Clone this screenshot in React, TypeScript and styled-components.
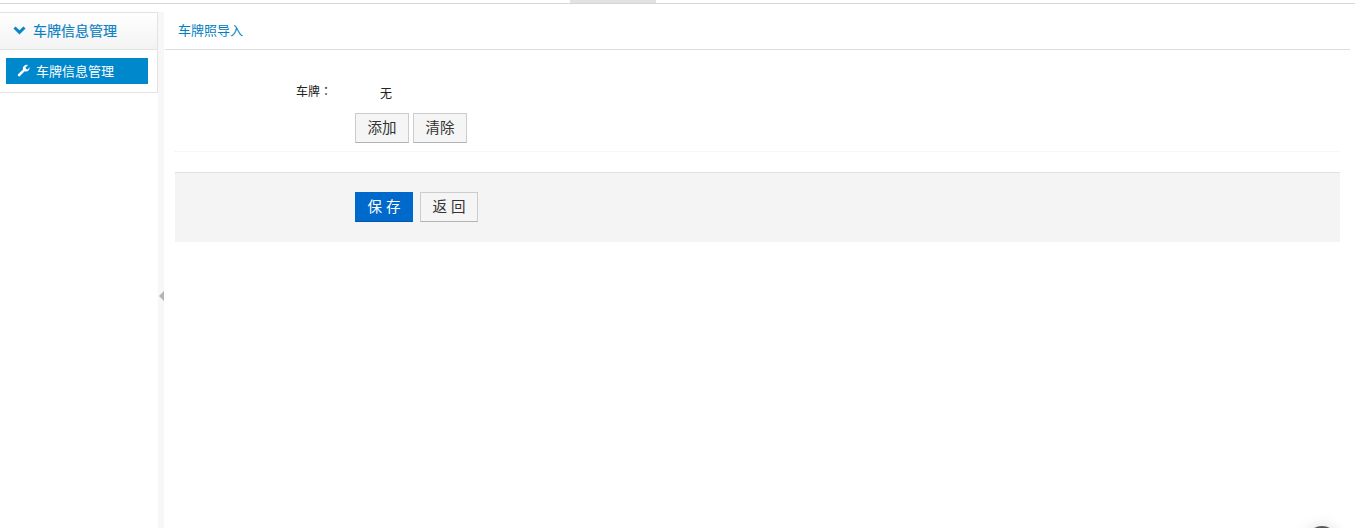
import React from "react";
import styled, { createGlobalStyle } from "styled-components";

const Global = createGlobalStyle`
  html, body { margin: 0; padding: 0; background: #fff; overflow: hidden; }
  body { font-family: "Liberation Sans", "Noto Sans CJK SC", sans-serif; font-size: 12px; color: #333; }
`;
const Page = styled.div`
  width: 1355px; height: 528px; display: flex; flex-direction: column; position: relative; overflow: hidden;
`;
const TopBar = styled.div`
  height: 3px; border-bottom: 1px solid #d6d6d6; padding-left: 570px; flex: none;
`;
const TopTab = styled.div`
  width: 86px; height: 3px; background: #e2e2e2;
`;
const Body = styled.div`
  flex: 1; display: flex; padding-top: 8px; min-height: 0;
`;
const Sidebar = styled.aside`
  width: 158px; flex: none;
`;
const MenuBox = styled.div`
  height: 81px; box-sizing: border-box; border: 1px solid #e3e3e3; border-left: none;
`;
const MenuHeader = styled.div`
  height: 37px; box-sizing: border-box; border-bottom: 1px solid #e3e3e3; padding-bottom: 2px;
  background: linear-gradient(#ffffff, #f3f3f3);
  display: flex; align-items: center; gap: 7px; padding-left: 13px;
  color: #0a82c4; font-size: 14px; font-weight: 400; -webkit-text-stroke: 0.2px #0a82c4;
`;
const MenuItem = styled.div`
  margin: 8px 9px 0 6px; height: 26px; box-sizing: border-box; padding-bottom: 2px; background: #0088cc; color: #fff;
  display: flex; align-items: center; gap: 6px; padding-left: 11px; font-size: 13px;
`;
const Divider = styled.div`
  width: 6px; flex: none; margin-right: 1px; background: #f7f7f7; position: relative;
`;
const Handle = styled.div`
  position: absolute; left: 1px; top: 279px; width: 0; height: 0;
  border-style: solid; border-width: 5px 5px 5px 0; border-color: transparent #b3b3b3 transparent transparent;
`;
const Content = styled.main`
  flex: 1; min-width: 0; padding-right: 5px;
`;
const Crumb = styled.div`
  height: 38px; box-sizing: border-box; border-bottom: 1px solid #dedede;
  padding: 10px 0 0 13px; color: #0080c0; font-size: 13px; line-height: 18px;
`;
const FormArea = styled.div`
  margin: 20px 10px 0;
`;
const FormRow = styled.div`
  height: 82px; box-sizing: border-box; border-bottom: 1px dotted #eeeeee;
  display: flex;
`;
const Label = styled.label`
  width: 157px; flex: none; box-sizing: border-box; text-align: right; padding: 13px 0 0 0;
  font-family: "Liberation Sans", "Noto Sans CJK TC", sans-serif;
  font-size: 12px; line-height: 18px; color: #222;
`;
const Field = styled.div`
  padding: 0 0 0 23px;
`;
const Value = styled.div`
  height: 43px; box-sizing: border-box; padding: 15px 0 0 25px; font-size: 12px; line-height: 18px; color: #222;
`;
const Buttons = styled.div<{ $gap: number }>`
  display: flex; gap: ${(p) => p.$gap}px;
`;
const Button = styled.button<{ $primary?: boolean; $w: number }>`
  width: ${(p) => p.$w}px; height: 30px; box-sizing: border-box; margin: 0; padding: 0;
  font-family: inherit; font-size: 14.5px; line-height: 1;
  border: 1px solid ${(p) => (p.$primary ? "#0066cc" : "#cccccc")};
  border-bottom-color: ${(p) => (p.$primary ? "#0057ad" : "#b3b3b3")};
  background: ${(p) => (p.$primary ? "#0069cc" : "#f5f5f5")};
  color: ${(p) => (p.$primary ? "#fff" : "#333")};
`;
const Actions = styled.div`
  margin-top: 20px; height: 70px; box-sizing: border-box; background: #f4f4f4; border-top: 1px solid #e0e0e0;
  padding: 19px 0 0 180px;
`;
const Corner = styled.div`
  position: absolute; left: 1306px; top: 526px; width: 32px; height: 32px; border-radius: 50%;
  background: #555; box-shadow: 0 0 10px 4px rgba(200,200,200,.3);
`;

export default function App() {
  return (
    <Page>
      <Global />
      <TopBar><TopTab /></TopBar>
      <Body>
        <Sidebar>
          <MenuBox>
            <MenuHeader>
              <svg width="13" height="9" viewBox="0 0 13 9"><path d="M1.500 1.500 6.500 6.300l5-4.800" fill="none" stroke="#0a86c8" strokeWidth="3" /></svg>
              车牌信息管理
            </MenuHeader>
            <MenuItem>
              <svg width="13" height="13" viewBox="0 0 13 13"><path d="M1 12 0.800 10.500 6 5.600C5.300 3.500 6.800 0.800 10 0.800l1 .2-2.500 2.400.6 1.700 1.700.5L12.500 3c.6 3-2 5.300-4.800 4.300L2.500 12.500z" fill="#fff" /></svg>
              车牌信息管理
            </MenuItem>
          </MenuBox>
        </Sidebar>
        <Divider><Handle /></Divider>
        <Content>
          <Crumb>车牌照导入</Crumb>
          <FormArea>
            <FormRow>
              <Label>车牌：</Label>
              <Field>
                <Value>无</Value>
                <Buttons $gap={4}>
                  <Button $w={54}>添加</Button>
                  <Button $w={54}>清除</Button>
                </Buttons>
              </Field>
            </FormRow>
            <Actions>
              <Buttons $gap={7}>
                <Button $w={58} $primary>保 存</Button>
                <Button $w={58}>返 回</Button>
              </Buttons>
            </Actions>
          </FormArea>
        </Content>
      </Body>
      <Corner />
    </Page>
  );
}
